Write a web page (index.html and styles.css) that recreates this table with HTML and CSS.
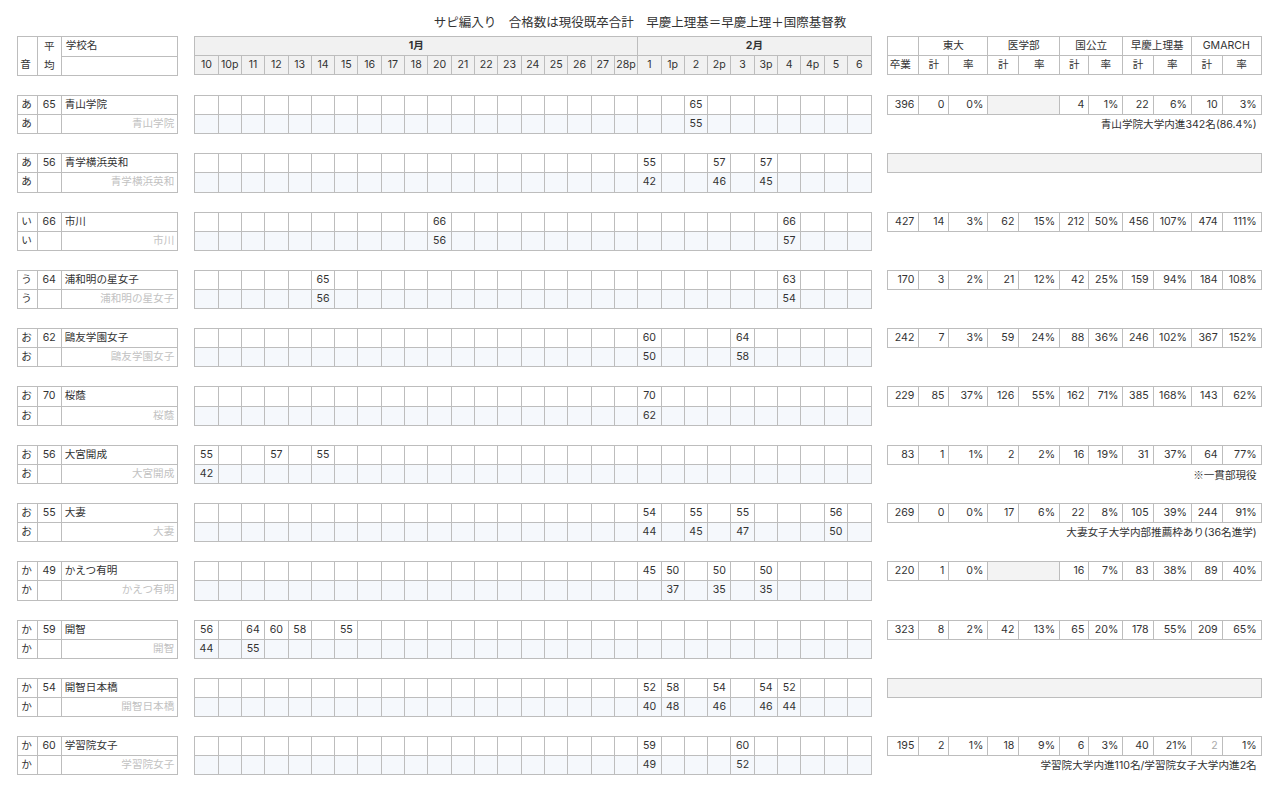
FILE: index.html
```html
<!DOCTYPE html>
<html lang="ja">
<head>
<meta charset="utf-8">
<title>サピ編入り</title>
<link rel="stylesheet" href="styles.css">
</head>
<body>
<h1 class="title">サピ編入り　合格数は現役既卒合計　早慶上理基＝早慶上理＋国際基督教</h1>

<div class="block head">
<table class="t-left"><colgroup><col class="ck"><col class="ca"><col></colgroup>
<tr><td class="hk" rowspan="2">音</td><td class="ha" rowspan="2">平<br>均</td><td class="hn">学校名</td></tr>
<tr><td></td></tr>
</table>
<table class="t-dates hdr"><colgroup><col span="29"></colgroup>
<tr class="hm"><td colspan="19">1月</td><td colspan="10">2月</td></tr>
<tr><td>10</td><td>10p</td><td>11</td><td>12</td><td>13</td><td>14</td><td>15</td><td>16</td><td>17</td><td>18</td><td>20</td><td>21</td><td>22</td><td>23</td><td>24</td><td>25</td><td>26</td><td>27</td><td>28p</td><td>1</td><td>1p</td><td>2</td><td>2p</td><td>3</td><td>3p</td><td>4</td><td>4p</td><td>5</td><td>6</td></tr>
</table>
<table class="t-right hdr"><colgroup><col><col><col><col><col><col><col><col><col><col><col></colgroup>
<tr><td></td><td colspan="2">東大</td><td colspan="2">医学部</td><td colspan="2">国公立</td><td colspan="2">早慶上理基</td><td colspan="2">GMARCH</td></tr>
<tr><td class="l">卒業</td><td>計</td><td>率</td><td>計</td><td>率</td><td>計</td><td>率</td><td>計</td><td>率</td><td>計</td><td>率</td></tr>
</table>
</div>

<!-- 青山学院 -->
<div class="block">
<table class="t-left"><colgroup><col class="ck"><col class="ca"><col></colgroup>
<tr><td>あ</td><td class="av">65</td><td>青山学院</td></tr>
<tr><td>あ</td><td></td><td class="sn">青山学院</td></tr>
</table>
<table class="t-dates"><colgroup><col span="29"></colgroup>
<tr><td></td><td></td><td></td><td></td><td></td><td></td><td></td><td></td><td></td><td></td>
<td></td><td></td><td></td><td></td><td></td><td></td><td></td><td></td><td></td>
<td></td><td></td><td>65</td><td></td><td></td><td></td><td></td><td></td><td></td><td></td></tr>
<tr class="sub"><td></td><td></td><td></td><td></td><td></td><td></td><td></td><td></td><td></td><td></td>
<td></td><td></td><td></td><td></td><td></td><td></td><td></td><td></td><td></td>
<td></td><td></td><td>55</td><td></td><td></td><td></td><td></td><td></td><td></td><td></td></tr>
</table>
<div class="rbox">
<table class="t-right"><colgroup><col><col><col><col><col><col><col><col><col><col><col></colgroup>
<tr><td>396</td><td>0</td><td>0%</td><td class="gray" colspan="2"></td><td>4</td><td>1%</td><td>22</td><td>6%</td><td>10</td><td>3%</td></tr>
</table>
<div class="note">青山学院大学内進342名(86.4%)</div>
</div>
</div>

<!-- 青学横浜英和 -->
<div class="block">
<table class="t-left"><colgroup><col class="ck"><col class="ca"><col></colgroup>
<tr><td>あ</td><td class="av">56</td><td>青学横浜英和</td></tr>
<tr><td>あ</td><td></td><td class="sn">青学横浜英和</td></tr>
</table>
<table class="t-dates"><colgroup><col span="29"></colgroup>
<tr><td></td><td></td><td></td><td></td><td></td><td></td><td></td><td></td><td></td><td></td>
<td></td><td></td><td></td><td></td><td></td><td></td><td></td><td></td><td></td>
<td>55</td><td></td><td></td><td>57</td><td></td><td>57</td><td></td><td></td><td></td><td></td></tr>
<tr class="sub"><td></td><td></td><td></td><td></td><td></td><td></td><td></td><td></td><td></td><td></td>
<td></td><td></td><td></td><td></td><td></td><td></td><td></td><td></td><td></td>
<td>42</td><td></td><td></td><td>46</td><td></td><td>45</td><td></td><td></td><td></td><td></td></tr>
</table>
<div class="rbox">
<table class="t-right"><tr><td class="gray full"></td></tr></table>
</div>
</div>

<!-- 市川 -->
<div class="block">
<table class="t-left"><colgroup><col class="ck"><col class="ca"><col></colgroup>
<tr><td>い</td><td class="av">66</td><td>市川</td></tr>
<tr><td>い</td><td></td><td class="sn">市川</td></tr>
</table>
<table class="t-dates"><colgroup><col span="29"></colgroup>
<tr><td></td><td></td><td></td><td></td><td></td><td></td><td></td><td></td><td></td><td></td>
<td>66</td><td></td><td></td><td></td><td></td><td></td><td></td><td></td><td></td>
<td></td><td></td><td></td><td></td><td></td><td></td><td>66</td><td></td><td></td><td></td></tr>
<tr class="sub"><td></td><td></td><td></td><td></td><td></td><td></td><td></td><td></td><td></td><td></td>
<td>56</td><td></td><td></td><td></td><td></td><td></td><td></td><td></td><td></td>
<td></td><td></td><td></td><td></td><td></td><td></td><td>57</td><td></td><td></td><td></td></tr>
</table>
<div class="rbox">
<table class="t-right"><colgroup><col><col><col><col><col><col><col><col><col><col><col></colgroup>
<tr><td>427</td><td>14</td><td>3%</td><td>62</td><td>15%</td><td>212</td><td>50%</td><td>456</td><td>107%</td><td>474</td><td>111%</td></tr>
</table>
</div>
</div>

<!-- 浦和明の星女子 -->
<div class="block">
<table class="t-left"><colgroup><col class="ck"><col class="ca"><col></colgroup>
<tr><td>う</td><td class="av">64</td><td>浦和明の星女子</td></tr>
<tr><td>う</td><td></td><td class="sn">浦和明の星女子</td></tr>
</table>
<table class="t-dates"><colgroup><col span="29"></colgroup>
<tr><td></td><td></td><td></td><td></td><td></td><td>65</td><td></td><td></td><td></td><td></td>
<td></td><td></td><td></td><td></td><td></td><td></td><td></td><td></td><td></td>
<td></td><td></td><td></td><td></td><td></td><td></td><td>63</td><td></td><td></td><td></td></tr>
<tr class="sub"><td></td><td></td><td></td><td></td><td></td><td>56</td><td></td><td></td><td></td><td></td>
<td></td><td></td><td></td><td></td><td></td><td></td><td></td><td></td><td></td>
<td></td><td></td><td></td><td></td><td></td><td></td><td>54</td><td></td><td></td><td></td></tr>
</table>
<div class="rbox">
<table class="t-right"><colgroup><col><col><col><col><col><col><col><col><col><col><col></colgroup>
<tr><td>170</td><td>3</td><td>2%</td><td>21</td><td>12%</td><td>42</td><td>25%</td><td>159</td><td>94%</td><td>184</td><td>108%</td></tr>
</table>
</div>
</div>

<!-- 鷗友学園女子 -->
<div class="block">
<table class="t-left"><colgroup><col class="ck"><col class="ca"><col></colgroup>
<tr><td>お</td><td class="av">62</td><td>鷗友学園女子</td></tr>
<tr><td>お</td><td></td><td class="sn">鷗友学園女子</td></tr>
</table>
<table class="t-dates"><colgroup><col span="29"></colgroup>
<tr><td></td><td></td><td></td><td></td><td></td><td></td><td></td><td></td><td></td><td></td>
<td></td><td></td><td></td><td></td><td></td><td></td><td></td><td></td><td></td>
<td>60</td><td></td><td></td><td></td><td>64</td><td></td><td></td><td></td><td></td><td></td></tr>
<tr class="sub"><td></td><td></td><td></td><td></td><td></td><td></td><td></td><td></td><td></td><td></td>
<td></td><td></td><td></td><td></td><td></td><td></td><td></td><td></td><td></td>
<td>50</td><td></td><td></td><td></td><td>58</td><td></td><td></td><td></td><td></td><td></td></tr>
</table>
<div class="rbox">
<table class="t-right"><colgroup><col><col><col><col><col><col><col><col><col><col><col></colgroup>
<tr><td>242</td><td>7</td><td>3%</td><td>59</td><td>24%</td><td>88</td><td>36%</td><td>246</td><td>102%</td><td>367</td><td>152%</td></tr>
</table>
</div>
</div>

<!-- 桜蔭 -->
<div class="block">
<table class="t-left"><colgroup><col class="ck"><col class="ca"><col></colgroup>
<tr><td>お</td><td class="av">70</td><td>桜蔭</td></tr>
<tr><td>お</td><td></td><td class="sn">桜蔭</td></tr>
</table>
<table class="t-dates"><colgroup><col span="29"></colgroup>
<tr><td></td><td></td><td></td><td></td><td></td><td></td><td></td><td></td><td></td><td></td>
<td></td><td></td><td></td><td></td><td></td><td></td><td></td><td></td><td></td>
<td>70</td><td></td><td></td><td></td><td></td><td></td><td></td><td></td><td></td><td></td></tr>
<tr class="sub"><td></td><td></td><td></td><td></td><td></td><td></td><td></td><td></td><td></td><td></td>
<td></td><td></td><td></td><td></td><td></td><td></td><td></td><td></td><td></td>
<td>62</td><td></td><td></td><td></td><td></td><td></td><td></td><td></td><td></td><td></td></tr>
</table>
<div class="rbox">
<table class="t-right"><colgroup><col><col><col><col><col><col><col><col><col><col><col></colgroup>
<tr><td>229</td><td>85</td><td>37%</td><td>126</td><td>55%</td><td>162</td><td>71%</td><td>385</td><td>168%</td><td>143</td><td>62%</td></tr>
</table>
</div>
</div>

<!-- 大宮開成 -->
<div class="block">
<table class="t-left"><colgroup><col class="ck"><col class="ca"><col></colgroup>
<tr><td>お</td><td class="av">56</td><td>大宮開成</td></tr>
<tr><td>お</td><td></td><td class="sn">大宮開成</td></tr>
</table>
<table class="t-dates"><colgroup><col span="29"></colgroup>
<tr><td>55</td><td></td><td></td><td>57</td><td></td><td>55</td><td></td><td></td><td></td><td></td>
<td></td><td></td><td></td><td></td><td></td><td></td><td></td><td></td><td></td>
<td></td><td></td><td></td><td></td><td></td><td></td><td></td><td></td><td></td><td></td></tr>
<tr class="sub"><td>42</td><td></td><td></td><td></td><td></td><td></td><td></td><td></td><td></td><td></td>
<td></td><td></td><td></td><td></td><td></td><td></td><td></td><td></td><td></td>
<td></td><td></td><td></td><td></td><td></td><td></td><td></td><td></td><td></td><td></td></tr>
</table>
<div class="rbox">
<table class="t-right"><colgroup><col><col><col><col><col><col><col><col><col><col><col></colgroup>
<tr><td>83</td><td>1</td><td>1%</td><td>2</td><td>2%</td><td>16</td><td>19%</td><td>31</td><td>37%</td><td>64</td><td>77%</td></tr>
</table>
<div class="note"><span class="cjk">※</span>一貫部現役</div>
</div>
</div>

<!-- 大妻 -->
<div class="block">
<table class="t-left"><colgroup><col class="ck"><col class="ca"><col></colgroup>
<tr><td>お</td><td class="av">55</td><td>大妻</td></tr>
<tr><td>お</td><td></td><td class="sn">大妻</td></tr>
</table>
<table class="t-dates"><colgroup><col span="29"></colgroup>
<tr><td></td><td></td><td></td><td></td><td></td><td></td><td></td><td></td><td></td><td></td>
<td></td><td></td><td></td><td></td><td></td><td></td><td></td><td></td><td></td>
<td>54</td><td></td><td>55</td><td></td><td>55</td><td></td><td></td><td></td><td>56</td><td></td></tr>
<tr class="sub"><td></td><td></td><td></td><td></td><td></td><td></td><td></td><td></td><td></td><td></td>
<td></td><td></td><td></td><td></td><td></td><td></td><td></td><td></td><td></td>
<td>44</td><td></td><td>45</td><td></td><td>47</td><td></td><td></td><td></td><td>50</td><td></td></tr>
</table>
<div class="rbox">
<table class="t-right"><colgroup><col><col><col><col><col><col><col><col><col><col><col></colgroup>
<tr><td>269</td><td>0</td><td>0%</td><td>17</td><td>6%</td><td>22</td><td>8%</td><td>105</td><td>39%</td><td>244</td><td>91%</td></tr>
</table>
<div class="note">大妻女子大学内部推薦枠あり(36名進学)</div>
</div>
</div>

<!-- かえつ有明 -->
<div class="block">
<table class="t-left"><colgroup><col class="ck"><col class="ca"><col></colgroup>
<tr><td>か</td><td class="av">49</td><td>かえつ有明</td></tr>
<tr><td>か</td><td></td><td class="sn">かえつ有明</td></tr>
</table>
<table class="t-dates"><colgroup><col span="29"></colgroup>
<tr><td></td><td></td><td></td><td></td><td></td><td></td><td></td><td></td><td></td><td></td>
<td></td><td></td><td></td><td></td><td></td><td></td><td></td><td></td><td></td>
<td>45</td><td>50</td><td></td><td>50</td><td></td><td>50</td><td></td><td></td><td></td><td></td></tr>
<tr class="sub"><td></td><td></td><td></td><td></td><td></td><td></td><td></td><td></td><td></td><td></td>
<td></td><td></td><td></td><td></td><td></td><td></td><td></td><td></td><td></td>
<td></td><td>37</td><td></td><td>35</td><td></td><td>35</td><td></td><td></td><td></td><td></td></tr>
</table>
<div class="rbox">
<table class="t-right"><colgroup><col><col><col><col><col><col><col><col><col><col><col></colgroup>
<tr><td>220</td><td>1</td><td>0%</td><td class="gray" colspan="2"></td><td>16</td><td>7%</td><td>83</td><td>38%</td><td>89</td><td>40%</td></tr>
</table>
</div>
</div>

<!-- 開智 -->
<div class="block">
<table class="t-left"><colgroup><col class="ck"><col class="ca"><col></colgroup>
<tr><td>か</td><td class="av">59</td><td>開智</td></tr>
<tr><td>か</td><td></td><td class="sn">開智</td></tr>
</table>
<table class="t-dates"><colgroup><col span="29"></colgroup>
<tr><td>56</td><td></td><td>64</td><td>60</td><td>58</td><td></td><td>55</td><td></td><td></td><td></td>
<td></td><td></td><td></td><td></td><td></td><td></td><td></td><td></td><td></td>
<td></td><td></td><td></td><td></td><td></td><td></td><td></td><td></td><td></td><td></td></tr>
<tr class="sub"><td>44</td><td></td><td>55</td><td></td><td></td><td></td><td></td><td></td><td></td><td></td>
<td></td><td></td><td></td><td></td><td></td><td></td><td></td><td></td><td></td>
<td></td><td></td><td></td><td></td><td></td><td></td><td></td><td></td><td></td><td></td></tr>
</table>
<div class="rbox">
<table class="t-right"><colgroup><col><col><col><col><col><col><col><col><col><col><col></colgroup>
<tr><td>323</td><td>8</td><td>2%</td><td>42</td><td>13%</td><td>65</td><td>20%</td><td>178</td><td>55%</td><td>209</td><td>65%</td></tr>
</table>
</div>
</div>

<!-- 開智日本橋 -->
<div class="block">
<table class="t-left"><colgroup><col class="ck"><col class="ca"><col></colgroup>
<tr><td>か</td><td class="av">54</td><td>開智日本橋</td></tr>
<tr><td>か</td><td></td><td class="sn">開智日本橋</td></tr>
</table>
<table class="t-dates"><colgroup><col span="29"></colgroup>
<tr><td></td><td></td><td></td><td></td><td></td><td></td><td></td><td></td><td></td><td></td>
<td></td><td></td><td></td><td></td><td></td><td></td><td></td><td></td><td></td>
<td>52</td><td>58</td><td></td><td>54</td><td></td><td>54</td><td>52</td><td></td><td></td><td></td></tr>
<tr class="sub"><td></td><td></td><td></td><td></td><td></td><td></td><td></td><td></td><td></td><td></td>
<td></td><td></td><td></td><td></td><td></td><td></td><td></td><td></td><td></td>
<td>40</td><td>48</td><td></td><td>46</td><td></td><td>46</td><td>44</td><td></td><td></td><td></td></tr>
</table>
<div class="rbox">
<table class="t-right"><tr><td class="gray full"></td></tr></table>
</div>
</div>

<!-- 学習院女子 -->
<div class="block">
<table class="t-left"><colgroup><col class="ck"><col class="ca"><col></colgroup>
<tr><td>か</td><td class="av">60</td><td>学習院女子</td></tr>
<tr><td>か</td><td></td><td class="sn">学習院女子</td></tr>
</table>
<table class="t-dates"><colgroup><col span="29"></colgroup>
<tr><td></td><td></td><td></td><td></td><td></td><td></td><td></td><td></td><td></td><td></td>
<td></td><td></td><td></td><td></td><td></td><td></td><td></td><td></td><td></td>
<td>59</td><td></td><td></td><td></td><td>60</td><td></td><td></td><td></td><td></td><td></td></tr>
<tr class="sub"><td></td><td></td><td></td><td></td><td></td><td></td><td></td><td></td><td></td><td></td>
<td></td><td></td><td></td><td></td><td></td><td></td><td></td><td></td><td></td>
<td>49</td><td></td><td></td><td></td><td>52</td><td></td><td></td><td></td><td></td><td></td></tr>
</table>
<div class="rbox">
<table class="t-right"><colgroup><col><col><col><col><col><col><col><col><col><col><col></colgroup>
<tr><td>195</td><td>2</td><td>1%</td><td>18</td><td>9%</td><td>6</td><td>3%</td><td>40</td><td>21%</td><td class="dim">2</td><td>1%</td></tr>
</table>
<div class="note">学習院大学内進110名/学習院女子大学内進2名</div>
</div>
</div>

</body>
</html>
```

FILE: styles.css
```css
* {
  box-sizing: border-box;
}

body {
  margin: 0;
  background: #ffffff;
  color: #333333;
  font-family: Inter, "Noto Sans CJK JP", sans-serif;
  font-size: 10.6px;
}

.cjk {
  font-family: "Noto Sans CJK JP", sans-serif;
}

.title {
  margin: 0;
  height: 36px;
  padding-top: 15px;
  font-size: 12.5px;
  font-weight: normal;
  line-height: 16px;
  text-align: center;
  color: #333333;
}

.block {
  display: flex;
  align-items: flex-start;
  padding-left: 17.3px;
  margin-top: 19px;
}

.block.head {
  margin-top: 0;
}

table {
  border-collapse: collapse;
  table-layout: fixed;
}

tr {
  height: 19.15px;
}

td {
  border: 1px solid #bdbdbd;
  padding: 0;
  white-space: nowrap;
  overflow: hidden;
  line-height: 12px;
  vertical-align: middle;
}

/* left: kana / average / school name */
.t-left {
  width: 161px;
}

.t-left .ck {
  width: 19.4px;
}

.t-left .ca {
  width: 24px;
}

.t-left td {
  padding-left: 3px;
}

.t-left td.av {
  padding-left: 0;
  text-align: center;
}

.t-left td.sn {
  text-align: right;
  padding-right: 3px;
  color: #c2c2c2;
}

.t-left .hk {
  vertical-align: bottom;
  padding-bottom: 4px;
  padding-left: 2px;
}

.t-left .ha {
  padding-left: 0;
  text-align: center;
  line-height: 19px;
}

.t-left .hn {
  padding-left: 4px;
}

/* dates */
.t-dates {
  width: 677.4px;
  margin-left: 16px;
}

.t-dates td {
  text-align: center;
}

.t-dates tr.sub td {
  background: #f5f8fc;
}

.t-dates.hdr td {
  background: #f1f1f1;
}

.t-dates .hm td {
  font-weight: bold;
}

/* right: results */
.rbox {
  margin-left: 15px;
  width: 375px;
}

.t-right {
  width: 375px;
}

.hdr.t-right {
  margin-left: 15px;
}

.t-right col:nth-child(1) { width: 31.7px; }
.t-right col:nth-child(2) { width: 30px; }
.t-right col:nth-child(3) { width: 39px; }
.t-right col:nth-child(4) { width: 31px; }
.t-right col:nth-child(5) { width: 40.7px; }
.t-right col:nth-child(6) { width: 29.3px; }
.t-right col:nth-child(7) { width: 34px; }
.t-right col:nth-child(8) { width: 30.3px; }
.t-right col:nth-child(9) { width: 38.3px; }
.t-right col:nth-child(10) { width: 30.7px; }

.t-right td {
  text-align: right;
  padding-right: 4px;
}

.t-right.hdr td {
  text-align: center;
  padding-right: 0;
}

.t-right.hdr td.l {
  text-align: left;
  padding-left: 2px;
}

.t-right td.gray {
  background: #f3f3f3;
}

.t-right td.dim {
  color: #a8a8a8;
}

.note {
  height: 19.15px;
  line-height: 19.15px;
  text-align: right;
  padding-right: 5px;
  white-space: nowrap;
}
```
